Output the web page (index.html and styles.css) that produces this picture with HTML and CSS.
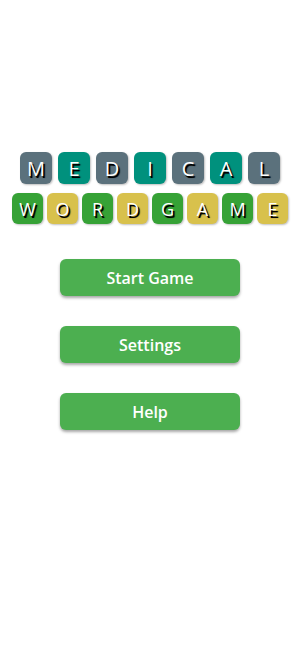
FILE: index.html
```html
<!DOCTYPE html>
<html>
<head>
<meta charset="utf-8">
<link rel="stylesheet" href="styles.css">
</head>
<body>
<main class="screen">
  <div class="title">
    <div class="row row-top">
      <span class="tile gray">M</span>
      <span class="tile teal">E</span>
      <span class="tile gray">D</span>
      <span class="tile teal">I</span>
      <span class="tile gray">C</span>
      <span class="tile teal">A</span>
      <span class="tile gray">L</span>
    </div>
    <div class="row row-bottom">
      <span class="tile green">W</span>
      <span class="tile yellow">O</span>
      <span class="tile green">R</span>
      <span class="tile yellow">D</span>
      <span class="tile green">G</span>
      <span class="tile yellow">A</span>
      <span class="tile green">M</span>
      <span class="tile yellow">E</span>
    </div>
  </div>
  <nav class="menu">
    <button class="btn">Start Game</button>
    <button class="btn">Settings</button>
    <button class="btn">Help</button>
  </nav>
</main>
</body>
</html>
```
FILE: styles.css
```css
html, body {
  margin: 0;
  padding: 0;
  background: #ffffff;
}
body {
  width: 300px;
  height: 666px;
  font-family: "Open Sans", "Noto Sans", "DejaVu Sans", sans-serif;
}
.screen {
  display: flex;
  flex-direction: column;
  align-items: center;
  padding-top: 152px;
}
.title {
  display: flex;
  flex-direction: column;
  align-items: center;
  gap: 9px;
}
.row {
  display: flex;
}
.row-top {
  gap: 6px;
}
.row-bottom {
  gap: 4px;
}
.tile {
  display: flex;
  align-items: center;
  justify-content: center;
  color: #ffffff;
  font-family: "Open Sans", "Noto Sans", sans-serif;
  font-weight: 400;
  text-shadow: 1.5px 1.5px 0 #000000, 2px 2px 1px rgba(0,0,0,0.6);
  border-radius: 6px;
  box-shadow: 1px 1px 2px rgba(0,0,0,0.25);
}
.row-top .tile {
  width: 32px;
  height: 32px;
  font-size: 20px;
}
.row-bottom .tile {
  width: 31px;
  height: 31px;
  font-size: 18px;
}
.gray { background: #5b717c; }
.teal { background: #00917d; }
.green { background: #36a236; }
.yellow { background: #d8c14c; }
.menu {
  display: flex;
  flex-direction: column;
  gap: 30px;
  margin-top: 35px;
}
.btn {
  width: 180px;
  height: 37px;
  border: none;
  border-radius: 6px;
  background: #4caf50;
  color: #ffffff;
  font-family: "Open Sans", "Noto Sans", sans-serif;
  font-weight: 600;
  font-size: 16px;
  padding: 0;
  box-shadow: 0 2px 3px rgba(0,0,0,0.35);
}
```
